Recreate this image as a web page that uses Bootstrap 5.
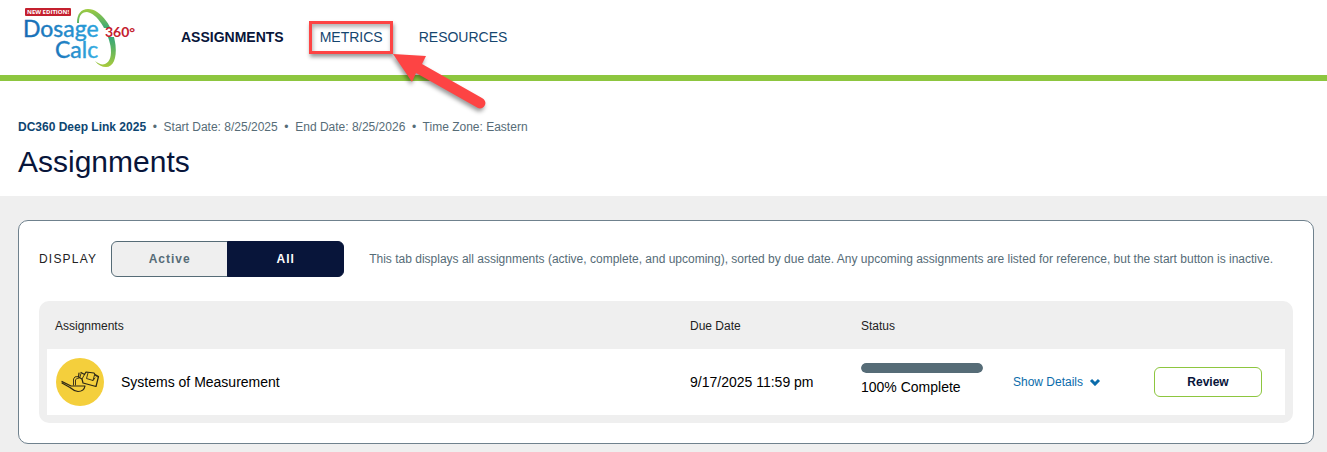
<!DOCTYPE html>
<html lang="en">
<head>
<meta charset="utf-8">
<meta name="viewport" content="width=device-width, initial-scale=1">
<title>Assignments - Dosage Calc 360</title>
<link href="https://cdn.jsdelivr.net/npm/bootstrap@5.3.0/dist/css/bootstrap.min.css" rel="stylesheet">
<style>
  :root { --navy: #08153a; --slate: #566c77; --green: #8dc63f; --mist: #efefef; }
  body { font-family: "Liberation Sans", Arial, sans-serif; font-size: 12px; line-height: 16px; color: #222; background: var(--mist); }
  .site-header { height: 81px; border-bottom: 6px solid var(--green); padding-left: 18px; }
  .brand-logo { width: 126px; height: 75px; }
  .main-menu { gap: 36px; margin-left: 37px; font-size: 14px; line-height: 20px; padding-bottom: 2px; }
  .main-menu a { color: #15466f; text-decoration: none; }
  .main-menu a.active { color: var(--navy); font-weight: 700; }
  .callout-box { position: absolute; inset: -6px -10px -7px -11px; border: 3px solid #fd4444; box-shadow: 1px 3px 4px rgba(0,0,0,.4), inset 1px 3px 4px rgba(0,0,0,.3); pointer-events: none; }
  .callout-arrow { position: absolute; left: 72px; top: 26px; z-index: 2; pointer-events: none; filter: drop-shadow(-1px 3px 2px rgba(0,0,0,.4)); }
  .page-head { padding: 38px 18px 16px; }
  .page-head p, .note { color: var(--slate); }
  .page-head strong { color: #0e4672; }
  .page-head h1 { font-size: 30px; line-height: 37px; color: var(--navy); }
  .page-body { padding: 24px 13px 8px 18px; }
  .panel { border: 1px solid #6f818d; border-radius: 10px; padding: 20px; }
  .display-label { letter-spacing: .1em; }
  .toggle-group { width: 233px; height: 36px; margin-left: 14px; margin-right: 25px; }
  .toggle-group .btn { font-size: 12px; line-height: 16px; font-weight: 700; letter-spacing: 1px; padding: 8px; flex: 1 1 0; border: 1px solid var(--slate); border-radius: 6px; color: var(--slate); background: var(--mist); }
  .toggle-group .btn.active { color: #fff; background: var(--navy); border-color: var(--navy); }
  .list-frame { background: var(--mist); border-radius: 10px; padding: 0 8px 8px; margin-top: 24px; }
  .list-frame table { width: 100%; table-layout: fixed; }
  .list-frame th { font-weight: 400; height: 48px; padding: 2px 8px 0; }
  .list-frame td { height: 66px; padding: 0 8px; background: #fff; color: #000; font-size: 14px; line-height: 20px; }
  .col-due { width: 171px; } .col-status { width: 152px; } .col-more { width: 141px; } .col-act { width: 139px; }
  .done-bar { width: 122px; height: 10px; border-radius: 5px; background: #dde2e5; margin-bottom: 4px; }
  .done-bar .progress-bar { background: var(--slate); border-radius: 5px; }
  .list-frame td.status-cell { padding-bottom: 4px; }
  .details-link { font-size: 12px; color: #0b6cab; text-decoration: none; gap: 6px; }
  .review-btn { width: 108px; height: 30px; padding: 0; font-size: 12px; font-weight: 700; color: var(--navy); border: 1px solid var(--green); border-radius: 6px; background: #fff; }
</style>
</head>
<body>
<header class="site-header bg-white d-flex align-items-center">
  <a href="#" aria-label="Dosage Calc 360">
    <svg class="brand-logo d-block" viewBox="18 0 126 75">
      <defs>
        <linearGradient id="blue" x1="0" y1="0" x2="1" y2="0"><stop offset="0" stop-color="#1769b3"/><stop offset="1" stop-color="#2ba3dc"/></linearGradient>
        <linearGradient id="blue2" x1="0" y1="0" x2="1" y2="0"><stop offset="0" stop-color="#1b75bb"/><stop offset="1" stop-color="#36afe3"/></linearGradient>
        <linearGradient id="swoosh" x1="0" y1="0" x2="0" y2="1"><stop offset="0" stop-color="#9fcb3f"/><stop offset=".4" stop-color="#27a183"/><stop offset=".65" stop-color="#55b164"/><stop offset="1" stop-color="#a9cb3b"/></linearGradient>
      </defs>
      <path fill="url(#swoosh)" d="M77 23C77 14 81 9 88 9C101 9 114 28 115.500 45C117 59 113 67 106 67C102 67 98 65 95 61C99 64 102 65 105 64C110 62 112 56 110.500 46C108 31 97 13 87 12C81 12 79 16 79 23Z"/>
      <rect x="25" y="8" width="46" height="8" rx="1" fill="#c4202e"/>
      <text x="27" y="14" font-family="Open Sans, sans-serif" font-weight="700" font-size="6" fill="#fff">NEW EDITION!</text>
      <g font-family="Lato, sans-serif" font-size="23">
        <rect x="104" y="28" width="10" height="9" fill="#fff"/>
        <text x="23" y="37" fill="url(#blue)" stroke="url(#blue)" stroke-width=".4">Dosage</text>
        <text x="55" y="58" fill="url(#blue2)" stroke="url(#blue2)" stroke-width=".4">Calc</text>
        <text x="105" y="37" font-size="14" font-weight="700" fill="#c4202e">360°</text>
      </g>
    </svg>
  </a>
  <nav class="main-menu d-flex">
    <a href="#" class="active" aria-current="page">ASSIGNMENTS</a>
    <div class="position-relative">
      <a href="#">METRICS</a>
      <span class="callout-box"></span>
      <svg class="callout-arrow" width="96" height="58" viewBox="392 53 96 58" aria-hidden="true">
        <path fill="#fd4444" d="M393 54L426 56L422 64L482 98A5 5 0 0 1 478 108L416 73L412 82Z"/>
      </svg>
    </div>
    <a href="#">RESOURCES</a>
  </nav>
</header>

<section class="page-head bg-white">
  <p class="mb-2"><strong>DC360 Deep Link 2025</strong> &nbsp;•&nbsp; Start Date: 8/25/2025 &nbsp;•&nbsp; End Date: 8/25/2026 &nbsp;•&nbsp; Time Zone: Eastern</p>
  <h1 class="fw-normal m-0">Assignments</h1>
</section>

<main class="page-body">
  <div class="panel bg-white">
    <div class="d-flex align-items-center">
      <span class="display-label" id="display-label">DISPLAY</span>
      <div class="toggle-group btn-group" role="group" aria-labelledby="display-label">
        <button type="button" class="btn">Active</button>
        <button type="button" class="btn active" aria-pressed="true">All</button>
      </div>
      <span class="note">This tab displays all assignments (active, complete, and upcoming), sorted by due date. Any upcoming assignments are listed for reference, but the start button is inactive.</span>
    </div>
    <div class="list-frame">
      <table class="align-middle">
        <thead>
          <tr><th scope="col">Assignments</th><th scope="col" class="col-due">Due Date</th><th scope="col" class="col-status">Status</th><th class="col-more"></th><th class="col-act"></th></tr>
        </thead>
        <tbody>
          <tr>
            <td>
              <div class="d-flex align-items-center gap-3">
                <svg width="50" height="48" viewBox="55 358 50 48" aria-hidden="true">
                  <circle cx="80" cy="382" r="24" fill="#f4cf3c"/>
                  <g fill="none" stroke="#2b2616" stroke-width="1.200" stroke-linejoin="round" stroke-linecap="round">
                    <path d="M62 381.500L71 386H85Q84 391.500 78 391.500Q74 391 70 387.500L62 383"/>
                    <path stroke-width=".9" d="M73.500 385V379Q74 376 78 376.500M75.500 385V380Q76 378 79 378"/>
                    <path d="M79 373L78.500 377L82 379L83 383L96 386.500L98.500 376.500L95 374.500L94 373L86 372L84.500 374.500L81 372.500"/>
                    <path stroke-width=".9" d="M81 373.500L80 377M84.500 374.500L82 379M88 373L86.500 378.500L93 380.500L94.500 375M94.500 375L98 377M93 380.500L95 378"/>
                  </g>
                </svg>
                <span>Systems of Measurement</span>
              </div>
            </td>
            <td>9/17/2025 11:59 pm</td>
            <td class="status-cell">
              <div class="progress done-bar" role="progressbar" aria-label="Completion" aria-valuenow="100" aria-valuemin="0" aria-valuemax="100"><div class="progress-bar" style="width: 100%"></div></div>
              <div>100% Complete</div>
            </td>
            <td>
              <a href="#" class="details-link d-flex align-items-center">Show Details
                <svg width="12" height="8" viewBox="0 0 12 8" aria-hidden="true"><path d="M2 2L6 6L10 2" fill="none" stroke="#0b6cab" stroke-width="3"/></svg>
              </a>
            </td>
            <td><button type="button" class="review-btn">Review</button></td>
          </tr>
        </tbody>
      </table>
    </div>
  </div>
</main>
<script src="https://cdn.jsdelivr.net/npm/bootstrap@5.3.0/dist/js/bootstrap.bundle.min.js"></script>
</body>
</html>
